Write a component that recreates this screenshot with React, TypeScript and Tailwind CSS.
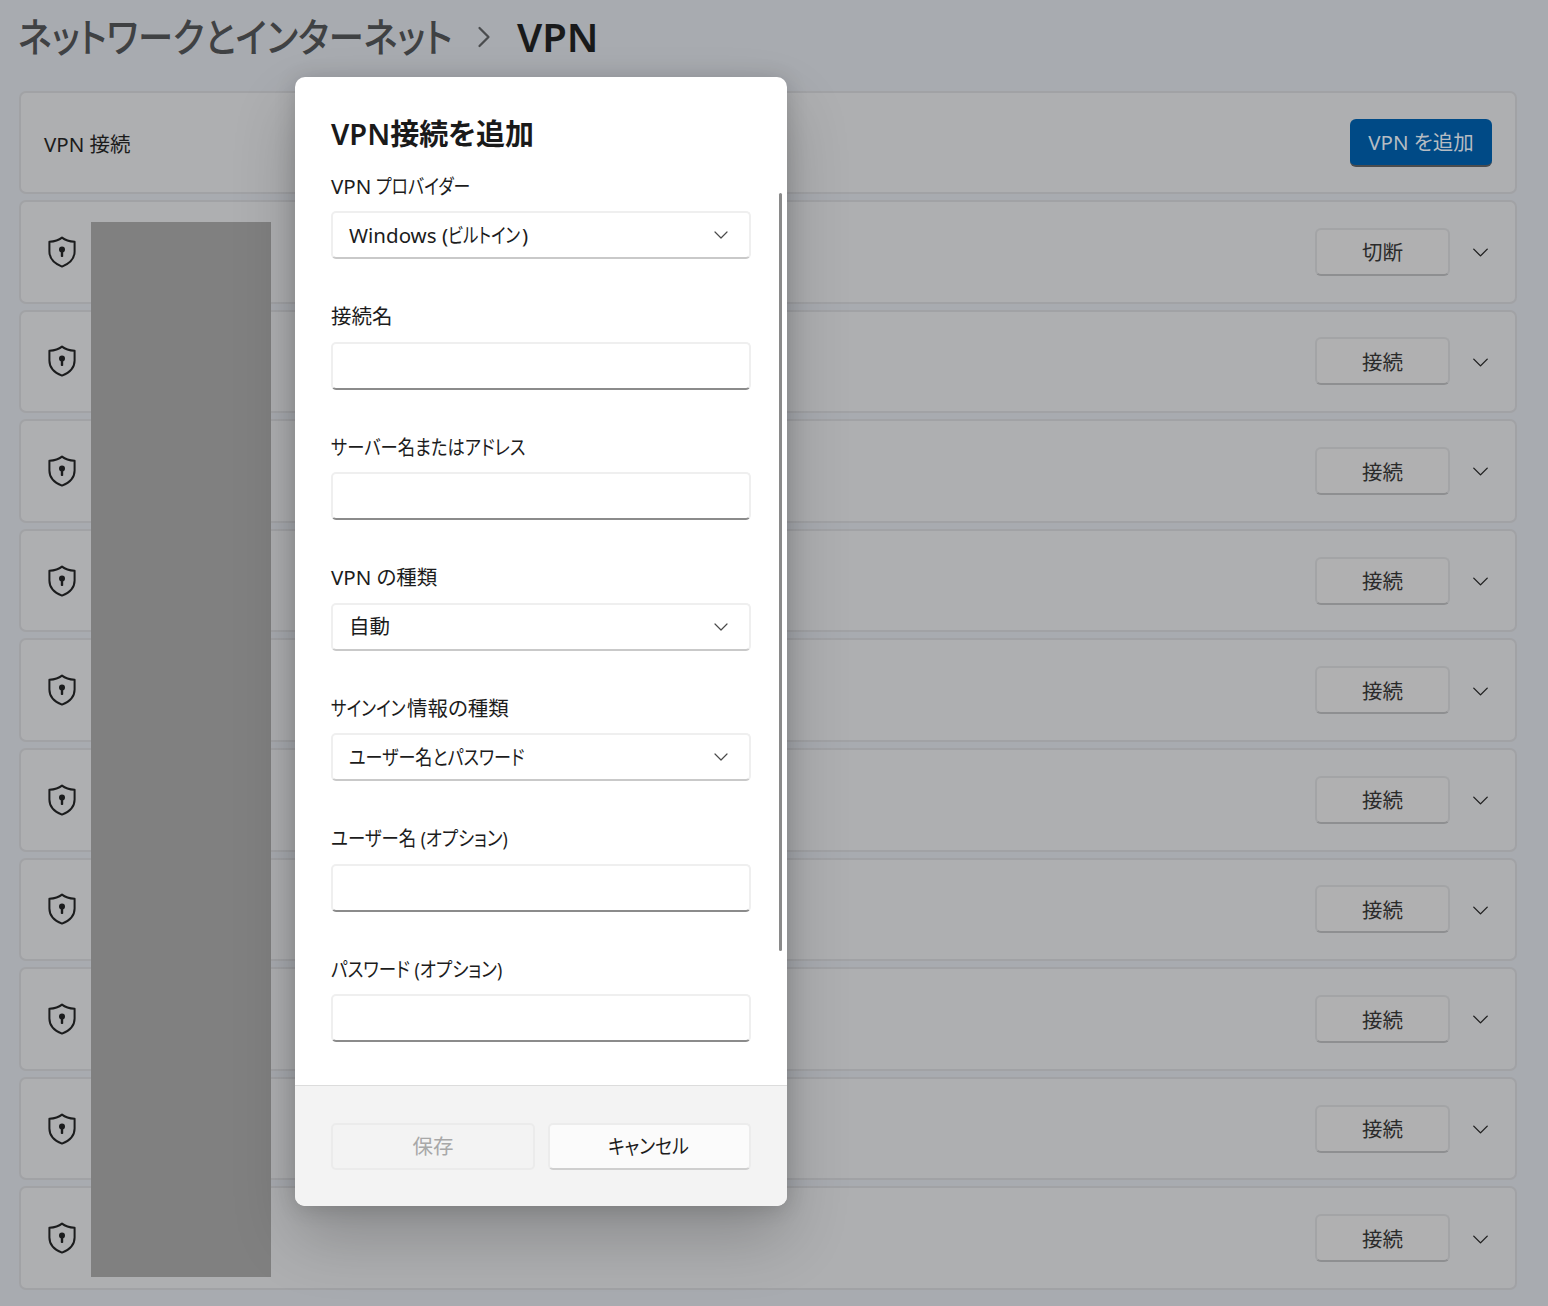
import React from 'react';
import { ChevronDown, ChevronRight } from 'lucide-react';

const font = 'font-["Noto_Sans","Noto_Sans_CJK_JP",sans-serif] [font-feature-settings:"palt"]';

const ShieldIcon = () => (
  <svg width="30" height="32" viewBox="0 0 30 32" fill="none" className="shrink-0">
    <path
      d="M15 1.6C11.6 4.2 7.4 5.4 2.4 5.8V15.4C2.4 22.4 7 27.4 15 30.6C23 27.4 27.6 22.4 27.6 15.4V5.8C22.6 5.4 18.4 4.2 15 1.6Z"
      stroke="#1b1c1d"
      strokeWidth="2"
      strokeLinejoin="round"
    />
    <circle cx="15" cy="13.6" r="3" fill="#1b1c1d" />
    <rect x="13.8" y="14" width="2.4" height="7" rx="0.8" fill="#1b1c1d" />
  </svg>
);

const VpnRow = ({ action }: { action: string }) => (
  <div className="h-[103.6px] shrink-0 rounded-[7px] border-2 border-[#a1a2a5] bg-[#aeafb1] flex items-center pl-[26px] pr-[21px]">
    <ShieldIcon />
    <div className="ml-auto flex items-center gap-[17px]">
      <button className="w-[135px] h-[48px] pt-[2px] rounded-[6px] border-2 border-[#a3a4a6] border-b-[#8e8f91] bg-[#b0b0b1] text-[20.5px] text-[#2b2b2b]">
        {action}
      </button>
      <ChevronDown size={27} strokeWidth={1.2} className="text-[#1f1f1f] mt-[2px]" />
    </div>
  </div>
);

const Field = ({ label, value, select }: { label: React.ReactNode; value?: React.ReactNode; select?: boolean }) => (
  <div className="h-[130.5px] shrink-0">
    <div className="h-[32px] mb-[9px] flex items-center text-[20.5px] text-[#1c1c1c] whitespace-nowrap">{label}</div>
    <div
      className={`h-[48px] rounded-[5px] border-2 border-[#efefef] bg-white flex items-center pl-[16px] pr-[16px] text-[20.5px] text-[#1c1c1c] whitespace-nowrap ${
        select ? 'border-b-[#c9c9c9]' : 'border-b-[#8b8b8b]'
      }`}
    >
      <span>{value}</span>
      {select && <ChevronDown size={24} strokeWidth={1.2} className="ml-auto text-[#4a4a4a]" />}
    </div>
  </div>
);

export default function App() {
  const rows = ['切断', '接続', '接続', '接続', '接続', '接続', '接続', '接続', '接続', '接続'];

  return (
    <div className={`relative w-[1548px] h-[1306px] overflow-hidden bg-[#a8abb0] ${font}`}>
      {/* breadcrumb */}
      <div className="h-[91px] pb-[18px] pl-[18px] flex items-center text-[40px] leading-none whitespace-nowrap">
        <span className="inline-block w-[434px] origin-left scale-x-[0.882] font-medium text-[#3f4143]">ネットワークとインターネット</span>
        <ChevronRight size={36} strokeWidth={1.5} className="ml-[14px] text-[#4a4c4e]" />
        <span className="ml-[15px] font-semibold text-[#191a1b]">VPN</span>
      </div>

      {/* list */}
      <div className="flex flex-col gap-[6px] pl-[19px] w-[1517px]">
        <div className="h-[103px] shrink-0 rounded-[7px] border-2 border-[#a1a2a5] bg-[#aeafb1] flex items-center pl-[23px] pr-[23px] text-[20.5px] text-[#1c1c1c]">
          <span className="pt-[4px]">VPN 接続</span>
          <button className="ml-auto w-[142px] h-[48px] pt-[1px] rounded-[6px] bg-[#004a86] border-b-2 border-b-[#4a4c4e] text-[20.5px] text-[#b5bcc3]">
            VPN を追加
          </button>
        </div>
        {rows.map((action, i) => (
          <VpnRow key={i} action={action} />
        ))}
      </div>

      {/* redacted names */}
      <div className="absolute left-[91px] top-[222px] w-[180px] h-[1055px] bg-[#808080]" />

      {/* dialog */}
      <div className="absolute left-[295px] top-[77px] w-[492px] h-[1129px] rounded-[10px] bg-white flex flex-col overflow-hidden shadow-[0_32px_64px_rgba(0,0,0,0.2),0_2px_21px_rgba(0,0,0,0.16)]">
        <div className="relative flex-1 px-[36px] pt-[38px]">
          <div className="h-[38px] mb-[17px] flex items-center text-[29px] font-semibold text-[#1a1a1a] whitespace-nowrap">
            VPN接続を追加
          </div>
          <Field
            label={<>VPN <span className="inline-block ml-[5px] w-[94px] origin-left scale-x-[0.825]">プロバイダー</span></>}
            value={<>Windows (<span className="inline-block w-[74px] origin-left scale-x-[0.8]">ビルトイン</span>)</>}
            select
          />
          <Field label="接続名" />
          <Field label={<span className="inline-block w-[195px] origin-left scale-x-[0.845]">サーバー名またはアドレス</span>} />
          <Field label="VPN の種類" value="自動" select />
          <Field
            label={<><span className="inline-block w-[76px] origin-left scale-x-[0.81]">サインイン</span>情報の種類</>}
            value={<span className="inline-block w-[175px] origin-left scale-x-[0.833]">ユーザー名とパスワード</span>}
            select
          />
          <Field label={<span className="inline-block w-[177px] origin-left scale-x-[0.85]">ユーザー名 (オプション)</span>} />
          <Field label={<span className="inline-block w-[171px] origin-left scale-x-[0.855]">パスワード (オプション)</span>} />
          <div className="absolute left-[484px] top-[116px] w-[3px] h-[758px] rounded-full bg-[#8a8a8a]" />
        </div>
        <div className="h-[121px] shrink-0 border-t border-t-[#dcdcdc] bg-[#f3f3f3] px-[36px] pt-[37px] flex gap-[13px]">
          <button className="w-[204px] h-[47px] rounded-[5px] border-2 border-[#ebebeb] text-[20.5px] text-[#a8a8a8]">保存</button>
          <button className="w-[203px] h-[47px] rounded-[5px] border-2 border-[#ececec] border-b-[#cfcfcf] bg-[#fbfbfb] text-[20.5px] text-[#1c1c1c] whitespace-nowrap">
            <span className="inline-block w-[80px] mr-[4px] origin-left scale-x-[0.87] text-left">キャンセル</span>
          </button>
        </div>
      </div>
    </div>
  );
}
